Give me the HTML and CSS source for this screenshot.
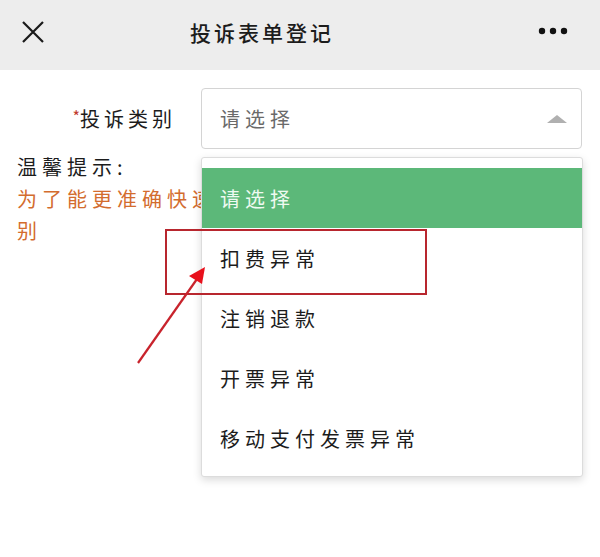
FILE: index.html
```html
<!DOCTYPE html>
<html lang="zh-CN">
<head>
	<meta charset="UTF-8">
	<meta name="viewport" content="width=device-width, initial-scale=1.0">
	<title>投诉表单登记</title>
	<link rel="stylesheet" href="styles.css">
</head>
<body>

	<div class="header">
		<svg class="close" width="24" height="24" viewBox="0 0 24 24">
			<path d="M2 2 L22 22 M22 2 L2 22" stroke="#1a1a1a" stroke-width="2.2" fill="none"/>
		</svg>
		<div class="title">投诉表单登记</div>
		<svg class="more" width="30" height="8" viewBox="0 0 30 8">
			<circle cx="4" cy="4" r="3.2" fill="#111"/>
			<circle cx="15" cy="4" r="3.2" fill="#111"/>
			<circle cx="26" cy="4" r="3.2" fill="#111"/>
		</svg>
	</div>

	<div class="page">
		<div class="form-row">
			<label class="label"><span class="star">*</span>投诉类别</label>
			<div class="select">
				<span class="placeholder">请选择</span>
				<span class="caret"></span>
			</div>
		</div>

		<div class="hint">
			<div class="hint-title">温馨提示:</div>
			<div class="hint-text">
				<div class="hint-line">为了能更准确快速地处理您的投诉，请选择正确的投诉类</div>
				<div>别</div>
			</div>
		</div>

		<ul class="dropdown">
			<li class="option selected">请选择</li>
			<li class="option">扣费异常</li>
			<li class="option">注销退款</li>
			<li class="option">开票异常</li>
			<li class="option">移动支付发票异常</li>
		</ul>

		<!-- annotation drawn over the screenshot -->
		<svg class="mark" width="600" height="487" viewBox="0 70 600 487">
			<rect x="166" y="230" width="260" height="64" fill="none" stroke="#b8262e" stroke-width="2"/>
			<line x1="138" y1="363" x2="197" y2="279" stroke="#c8232c" stroke-width="2.2"/>
			<polygon points="205,267 189,276 202,284" fill="#e8101c"/>
		</svg>
	</div>

</body>
</html>
```

FILE: styles.css
```css
html, body {
	margin: 0;
	padding: 0;
	background: #fff;
	font-family: "Noto Sans CJK SC", "Noto Sans", sans-serif;
	color: #1c1c1c;
}

.header {
	height: 70px;
	background: #ededed;
	display: flex;
	align-items: center;
	padding: 0 32px 0 21px;
	box-sizing: border-box;
}

.close {
	margin-top: -6px;
}

.title {
	flex: 1;
	padding-left: 145px;
	margin-top: -6px;
	font-size: 21px;
	font-weight: 500;
	letter-spacing: 3px;
}

.more {
	margin-top: -8px;
}

.page {
	position: relative;
	height: 487px;
	overflow: hidden;
}

.form-row {
	display: flex;
	align-items: center;
	padding-top: 18px;
}

.label {
	width: 180px;
	box-sizing: border-box;
	text-align: right;
	padding-right: 4px;
	font-size: 20px;
	letter-spacing: 4px;
}

.star {
	color: #c0392b;
	font-size: 16px;
	letter-spacing: 0;
	vertical-align: 4px;
}

.select {
	margin-left: 21px;
	width: 381px;
	height: 61px;
	box-sizing: border-box;
	border: 1px solid #d4d4d4;
	border-radius: 4px;
	display: flex;
	align-items: center;
	justify-content: space-between;
	padding: 0 14px 0 18px;
}

.placeholder {
	font-size: 20px;
	letter-spacing: 5px;
	color: #6a6a6a;
}

.caret {
	width: 0;
	height: 0;
	border-left: 10px solid transparent;
	border-right: 10px solid transparent;
	border-bottom: 8px solid #b0b0b0;
}

.hint {
	padding: 2px 0 0 17px;
	font-size: 20px;
	line-height: 32px;
	letter-spacing: 5px;
}

.hint-text {
	color: #d36c2e;
}

/* the rest of the line is hidden behind the open list */
.hint-line {
	width: 184px;
	white-space: nowrap;
	overflow: hidden;
}

.dropdown {
	position: absolute;
	top: 87px;
	left: 201px;
	width: 382px;
	margin: 0;
	padding: 10px 0 8px;
	list-style: none;
	background: #fff;
	border: 1px solid #dcdcdc;
	border-radius: 3px;
	box-sizing: border-box;
	box-shadow: 0 3px 8px rgba(0, 0, 0, 0.15);
}

.option {
	height: 60px;
	display: flex;
	align-items: center;
	padding-left: 18px;
	font-size: 20px;
	letter-spacing: 5px;
	color: #1c1c1c;
}

.option.selected {
	background: #5cb879;
	color: #eefaf1;
}

.mark {
	position: absolute;
	top: 0;
	left: 0;
	pointer-events: none;
}
```
